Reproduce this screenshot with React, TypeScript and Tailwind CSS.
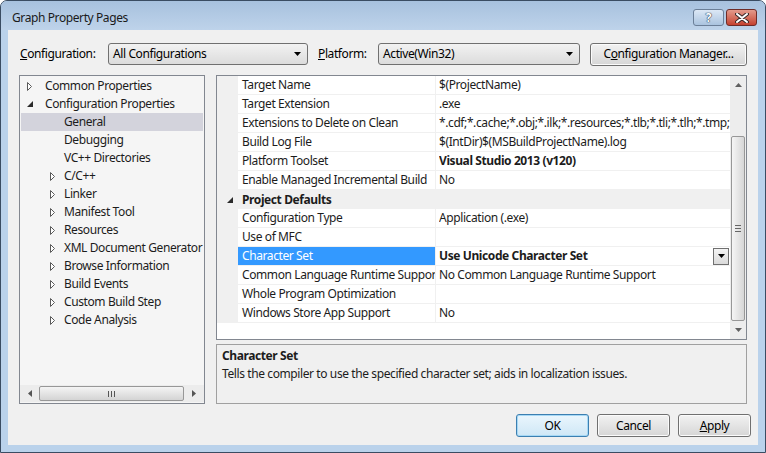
import React from "react";

const font = { fontFamily: '"Noto Sans", "Open Sans", sans-serif' };

type TreeItem = { label: string; level: 0 | 1; arrow?: "open" | "closed"; selected?: boolean };

const tree: TreeItem[] = [
  { label: "Common Properties", level: 0, arrow: "closed" },
  { label: "Configuration Properties", level: 0, arrow: "open" },
  { label: "General", level: 1, selected: true },
  { label: "Debugging", level: 1 },
  { label: "VC++ Directories", level: 1 },
  { label: "C/C++", level: 1, arrow: "closed" },
  { label: "Linker", level: 1, arrow: "closed" },
  { label: "Manifest Tool", level: 1, arrow: "closed" },
  { label: "Resources", level: 1, arrow: "closed" },
  { label: "XML Document Generator", level: 1, arrow: "closed" },
  { label: "Browse Information", level: 1, arrow: "closed" },
  { label: "Build Events", level: 1, arrow: "closed" },
  { label: "Custom Build Step", level: 1, arrow: "closed" },
  { label: "Code Analysis", level: 1, arrow: "closed" },
];

type PropRow =
  | { category: string }
  | { name: string; value: string; bold?: boolean; selected?: boolean };

const props: PropRow[] = [
  { name: "Target Name", value: "$(ProjectName)" },
  { name: "Target Extension", value: ".exe" },
  {
    name: "Extensions to Delete on Clean",
    value:
      "*.cdf;*.cache;*.obj;*.ilk;*.resources;*.tlb;*.tli;*.tlh;*.tmp;*.rsp;*.pgc;*.pgd;*.meta;*.tlog;*.manifest;*.res;*.pch;*.exp",
  },
  { name: "Build Log File", value: "$(IntDir)$(MSBuildProjectName).log" },
  { name: "Platform Toolset", value: "Visual Studio 2013 (v120)", bold: true },
  { name: "Enable Managed Incremental Build", value: "No" },
  { category: "Project Defaults" },
  { name: "Configuration Type", value: "Application (.exe)" },
  { name: "Use of MFC", value: "" },
  { name: "Character Set", value: "Use Unicode Character Set", bold: true, selected: true },
  { name: "Common Language Runtime Support", value: "No Common Language Runtime Support" },
  { name: "Whole Program Optimization", value: "" },
  { name: "Windows Store App Support", value: "No" },
];

function ClosedArrow() {
  return (
    <svg width="6" height="9" viewBox="0 0 6 9">
      <path d="M0.5 0.5 L4.5 4.5 L0.5 8.5 Z" fill="#ffffff" stroke="#5a5a5a" strokeWidth="1" />
    </svg>
  );
}

function OpenArrow() {
  return (
    <svg width="6" height="6" viewBox="0 0 6 6">
      <path d="M6 0 L6 6 L0 6 Z" fill="#2a2a2a" />
    </svg>
  );
}

function DownTri({ color = "#000" }: { color?: string }) {
  return (
    <svg width="7" height="4" viewBox="0 0 7 4">
      <path d="M0 0 L7 0 L3.5 4 Z" fill={color} />
    </svg>
  );
}

function Combo({ text, width }: { text: string; width: string }) {
  return (
    <div
      className={`${width} h-[22px] flex items-center justify-between pl-[4px] pr-[4px] border border-[#707070] rounded-[3px] bg-gradient-to-b from-[#f2f2f2] to-[#dcdcdc]`}
    >
      <span>{text}</span>
      <span className="w-[12px] flex justify-center">
        <DownTri />
      </span>
    </div>
  );
}

function Button({ children, primary }: { children: React.ReactNode; primary?: boolean }) {
  return (
    <div
      className={`w-[73px] h-[23px] flex items-center justify-center rounded-[3px] border ${
        primary
          ? "border-[#3c7fb1] shadow-[inset_0_0_0_1px_#a6d8f5] bg-gradient-to-b from-[#eaf6fd] to-[#cfe7f6]"
          : "border-[#707070] shadow-[inset_0_0_0_1px_#fbfbfb] bg-gradient-to-b from-[#f2f2f2] to-[#d6d6d6]"
      }`}
    >
      {children}
    </div>
  );
}

export default function App() {
  return (
    <div
      className="w-[766px] h-[453px] bg-[#bad2eb] border border-[#3a4c62] rounded-t-[7px] flex flex-col text-[12px] tracking-[-0.4px] text-black overflow-hidden"
      style={font}
    >
      {/* title bar */}
      <div className="h-[29px] flex items-start bg-gradient-to-b from-[#a7c1de] to-[#bed3ea]">
        <span className="pl-[11px] pt-[9px] leading-[16px] text-[#1a1a1a]">Graph Property Pages</span>
        <div className="ml-auto mt-[8px] mr-[8px] flex gap-[2px]">
          <div className="w-[31px] h-[17px] rounded-[3px] border border-[#6b7f98] bg-gradient-to-b from-[#dce8f5] to-[#aac3df] flex items-center justify-center">
            <span
              className="text-white font-bold text-[12px] leading-none"
              style={{ textShadow: "0 0 1px #2c3e55, 0 0 1px #2c3e55, 0 0 1px #2c3e55" }}
            >
              ?
            </span>
          </div>
          <div className="w-[31px] h-[17px] rounded-[3px] border border-[#6e2c28] bg-gradient-to-b from-[#e39a8c] to-[#c4402f] flex items-center justify-center">
            <svg width="14" height="10" viewBox="0 0 14 10">
              <path d="M2 1 L12 9 M12 1 L2 9" stroke="#3a2a2a" strokeWidth="4" strokeLinecap="round" />
              <path d="M2 1 L12 9 M12 1 L2 9" stroke="#ffffff" strokeWidth="2" strokeLinecap="round" />
            </svg>
          </div>
        </div>
      </div>

      {/* client area */}
      <div className="mx-[7px] h-[415px] bg-[#f0f0f0] flex flex-col">
        {/* configuration row */}
        <div className="px-[11px] pt-[13px] flex items-center h-[35px]">
          <span className="w-[89px] pl-[1px]">
            <u>C</u>onfiguration:
          </span>
          <Combo text="All Configurations" width="w-[200px]" />
          <span className="ml-[10px] w-[60px]">
            <u>P</u>latform:
          </span>
          <Combo text="Active(Win32)" width="w-[202px]" />
          <div className="ml-auto w-[157px] h-[23px] flex items-center justify-center rounded-[3px] border border-[#707070] shadow-[inset_0_0_0_1px_#fbfbfb] bg-gradient-to-b from-[#f2f2f2] to-[#d6d6d6]">
            <span>
              C<u>o</u>nfiguration Manager...
            </span>
          </div>
        </div>

        {/* main area */}
        <div className="px-[11px] mt-[10px] flex gap-[11px] h-[329px]">
          {/* tree */}
          <div className="w-[186px] shrink-0 h-full border border-[#828790] bg-[#f5f5f5] flex flex-col">
            <div className="flex-1 pt-[1px] overflow-hidden">
              {tree.map((t) => (
                <div
                  key={t.label}
                  className={`mx-[1px] h-[18px] flex items-center whitespace-nowrap overflow-hidden ${t.selected ? "bg-[#d3d3dc]" : ""}`}
                >
                  <span
                    className={`${t.level === 0 ? "w-[24px] pl-[6px]" : "w-[43px] pl-[29px]"} shrink-0 flex items-center`}
                  >
                    {t.arrow === "closed" && <ClosedArrow />}
                    {t.arrow === "open" && <OpenArrow />}
                  </span>
                  <span className="text-[#1c1c1c]">{t.label}</span>
                </div>
              ))}
            </div>
            {/* horizontal scrollbar */}
            <div className="h-[17px] mb-[1px] flex items-center bg-[#ececec]">
              <span className="w-[19px] flex justify-center">
                <svg width="4" height="7" viewBox="0 0 4 7">
                  <path d="M4 0 L4 7 L0 3.5 Z" fill="#555" />
                </svg>
              </span>
              <div className="w-[145px] h-[15px] rounded-[2px] border border-[#979797] bg-gradient-to-b from-[#f4f4f4] to-[#d4d4d4] flex items-center justify-center">
                <svg width="7" height="6" viewBox="0 0 7 6">
                  <path d="M0.5 0 V6 M3.5 0 V6 M6.5 0 V6" stroke="#555" strokeWidth="1" />
                </svg>
              </div>
              <span className="flex-1 flex justify-center">
                <svg width="4" height="7" viewBox="0 0 4 7">
                  <path d="M0 0 L0 7 L4 3.5 Z" fill="#555" />
                </svg>
              </span>
            </div>
          </div>

          {/* right column */}
          <div className="flex-1 min-w-0 flex flex-col gap-[4px]">
            {/* property grid */}
            <div className="h-[265px] border border-[#828790] bg-white flex">
              <div className="flex-1 min-w-0 flex flex-col overflow-hidden">
                {props.map((p, i) =>
                  "category" in p ? (
                    <div key={i} className="h-[19px] shrink-0 flex items-center bg-[#f0f0f0]">
                      <span className="w-[25px] pl-[10px] flex items-center">
                        <OpenArrow />
                      </span>
                      <span className="font-bold text-[#1c1c1c]">{p.category}</span>
                    </div>
                  ) : (
                    <div key={i} className="h-[19px] shrink-0 flex">
                      <div className="w-[21px] shrink-0 bg-[#f0f0f0]" />
                      <div
                        className={`w-[198px] shrink-0 border-r border-b border-[#f0f0f0] pl-[4px] flex items-center whitespace-nowrap overflow-hidden ${
                          p.selected ? "bg-[#3399ff] text-white" : "text-[#1c1c1c]"
                        }`}
                      >
                        {p.name}
                      </div>
                      <div
                        className={`flex-1 min-w-0 border-b border-[#f0f0f0] pl-[3px] flex items-center whitespace-nowrap overflow-hidden text-[#1c1c1c] ${
                          p.bold ? "font-bold" : ""
                        }`}
                      >
                        <span className="flex-1 min-w-0 overflow-hidden">{p.value}</span>
                        {p.selected && (
                          <div className="w-[16px] h-[17px] shrink-0 mr-[1px] border border-[#707070] bg-gradient-to-b from-[#f4f4f4] to-[#dadada] flex items-center justify-center">
                            <DownTri />
                          </div>
                        )}
                      </div>
                    </div>
                  )
                )}
              </div>
              {/* vertical scrollbar */}
              <div className="w-[16px] shrink-0 bg-[#ededed] flex flex-col items-center">
                <div className="h-[17px] flex items-center justify-center">
                  <svg width="7" height="4" viewBox="0 0 7 4">
                    <path d="M0 4 L7 4 L3.5 0 Z" fill="#606060" />
                  </svg>
                </div>
                <div className="mt-[43px] w-[14px] h-[185px] rounded-[2px] border border-[#979797] bg-gradient-to-r from-[#f5f5f5] to-[#d6d6d6] flex items-center justify-center">
                  <svg width="6" height="7" viewBox="0 0 6 7">
                    <path d="M0 0.5 H6 M0 3.5 H6 M0 6.5 H6" stroke="#666" strokeWidth="1" />
                  </svg>
                </div>
                <div className="flex-1 flex items-center justify-center">
                  <DownTri color="#606060" />
                </div>
              </div>
            </div>

            {/* description */}
            <div className="h-[60px] border border-[#a0a0a0] bg-[#f0f0f0] pl-[5px] pt-[2px] leading-[18px] text-[#1c1c1c]">
              <div className="font-bold">Character Set</div>
              <div>Tells the compiler to use the specified character set; aids in localization issues.</div>
            </div>
          </div>
        </div>

        {/* buttons */}
        <div className="mt-[10px] pr-[7px] flex justify-end gap-[8px]">
          <Button primary>OK</Button>
          <Button>Cancel</Button>
          <Button>
            <span>
              <u>A</u>pply
            </span>
          </Button>
        </div>
      </div>
    </div>
  );
}
